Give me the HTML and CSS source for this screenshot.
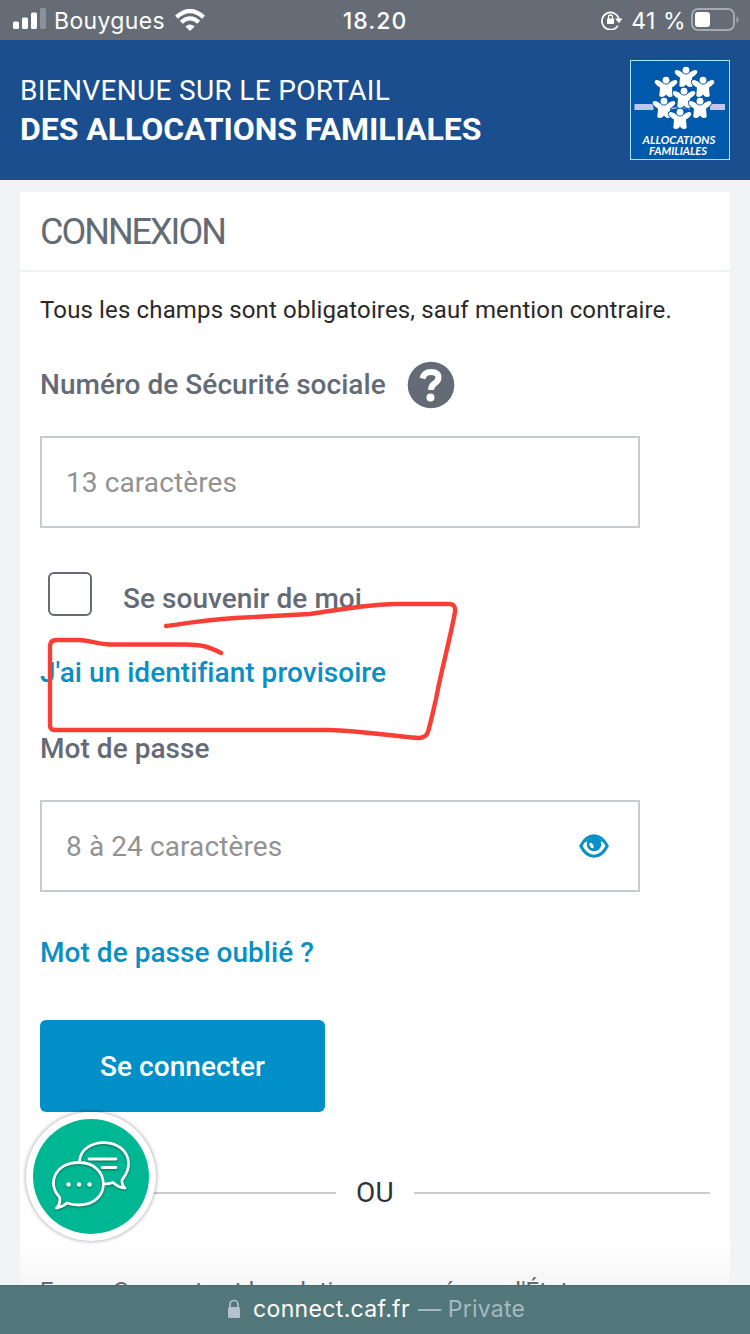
FILE: index.html
```html
<!DOCTYPE html>
<html lang="fr">
<head>
<meta charset="utf-8">
<title>Connexion</title>
<link rel="stylesheet" href="styles.css">
</head>
<body>
<div class="screen">
  <div class="status">
    <div class="status-left">
      <svg class="signal" width="34" height="22" viewBox="0 0 34 22"><g fill="#fff"><rect x="0" y="13.5" width="6" height="7.500" rx="1.500"/><rect x="9" y="9.500" width="6" height="11.500" rx="1.500"/><rect x="18" y="4.500" width="6" height="16.500" rx="1.500"/><rect x="27" y="0" width="6" height="21" rx="1.500" opacity=".25"/></g></svg>
      <span class="carrier">Bouygues</span>
      <svg class="wifi" width="30" height="22" viewBox="0 0 30 22"><g fill="none" stroke="#fff" stroke-width="4.200"><path d="M1.500 8.200Q15-4.200 28.500 8.200"/><path d="M6.300 13.200Q15 5.500 23.700 13.200"/></g><path d="M15 22l-4.600-4.600q4.600-3.900 9.200 0z" fill="#fff"/></svg>
    </div>
    <span class="clock">18.20</span>
    <div class="status-right">
      <svg width="22" height="20" viewBox="0 0 22 20"><path d="M16.800 15.700A8.600 8.600 0 1 1 18 9.500" fill="none" stroke="#fff" stroke-width="1.700"/><path d="M14 8.500h7.500L18 13.200z" fill="#fff"/><rect x="6" y="8.500" width="7" height="5.500" rx=".7" fill="#fff"/><path d="M7.500 9V7a2 2 0 0 1 4 0v2" fill="none" stroke="#fff" stroke-width="1.300"/></svg>
      <span class="percent">41 %</span>
      <svg width="48" height="24" viewBox="0 0 48 24"><rect x="1" y="1" width="42" height="21" rx="6" fill="none" stroke="#a5a9b0" stroke-width="2"/><rect x="4" y="4" width="15" height="15" rx="3" fill="#fff"/><path d="M45.500 8.200q4 3.500 0 7z" fill="#a5a9b0"/></svg>
    </div>
  </div>

  <header class="banner">
    <div class="banner-title">
      <span class="welcome">BIENVENUE SUR LE PORTAIL</span>
      <strong class="portal">DES ALLOCATIONS FAMILIALES</strong>
    </div>
    <svg class="logo" width="100" height="100" viewBox="0 0 100 100">
      <defs>
        <g id="person" stroke="#0059aa" stroke-width="2" paint-order="stroke">
          <path d="M-11-4.300C-12-2-10.500-.8-6 2.500L-6.700 11Q-4.300 13-1.600 11.300L0 9.500l1.600 1.800Q4.300 13 6.700 11L6 2.500C10.500-.8 12-2 11-4.300 9.500-6 6.500-4.500 3.800-2.600Q0-1.200-3.800-2.600C-6.500-4.500-9.500-6-11-4.300z"/>
          <circle cy="-4.800" r="3.400"/>
        </g>
      </defs>
      <rect x=".5" y=".5" width="99" height="99" fill="#0059aa" stroke="#a9e5f8"/>
      <path fill="#bec6ee" d="M4.500 44h19v6h-19zM80 44h15v6H80z"/>
      <path d="M40 49q10-3 20 0" fill="none" stroke="#bec6ee" stroke-width="1.500"/>
      <g fill="#fff">
        <use href="#person" x="56" y="15"/>
        <use href="#person" x="36" y="25"/>
        <use href="#person" x="73" y="25"/>
        <use href="#person" x="54" y="36"/>
        <use href="#person" x="34" y="46"/>
        <use href="#person" x="70" y="46"/>
        <use href="#person" x="50" y="57"/>
      </g>
      <g class="logo-text"><text x="12.500" y="84" textLength="73" lengthAdjust="spacingAndGlyphs">ALLOCATIONS</text><text x="19" y="95" textLength="58" lengthAdjust="spacingAndGlyphs">FAMILIALES</text></g>
    </svg>
  </header>

  <main class="card">
    <h1 class="heading">CONNEXION</h1>
    <div class="form">
      <p class="notice">Tous les champs sont obligatoires, sauf mention contraire.</p>
      <div class="label-row">
        <label class="label ssn">Numéro de Sécurité sociale</label>
        <svg width="48" height="48" viewBox="0 0 48 48"><circle cx="24" cy="24" r="23.300" fill="#646b76"/><path d="M15.500 17.500Q17 11 24 11Q31.500 11 31.500 16.500Q31.500 20 27.500 22.500Q24 25 24 29" fill="none" stroke="#fff" stroke-width="6"/><circle cx="23.500" cy="36.500" r="4" fill="#fff"/></svg>
      </div>
      <div class="field"><span>13 caractères</span></div>
      <div class="remember"><span class="checkbox"></span><span class="label rem">Se souvenir de moi</span></div>
      <a class="link temp">J'ai un identifiant provisoire</a>
      <label class="label pwd">Mot de passe</label>
      <div class="field"><span>8 à 24 caractères</span>
        <svg width="30" height="24" viewBox="0 0 30 24"><path d="M1.800 12Q7 1.800 15 1.800T28.200 12Q23 22.200 15 22.200T1.800 12z" fill="#fff" stroke="#0a90c4" stroke-width="3"/><path d="M4 9Q15-2 26 9L21 7H9z" fill="#0a90c4"/><circle cx="15" cy="10" r="7.300" fill="#0a90c4"/><ellipse cx="12.500" cy="11.500" rx="1.700" ry="3" transform="rotate(-30 12.500 11.500)" fill="#fff"/></svg>
      </div>
      <a class="link forgot">Mot de passe oublié ?</a>
      <button class="submit">Se connecter</button>
      <div class="separator"><span>OU</span></div>
      <p class="france">FranceConnect est la solution proposée par l'État</p>
    </div>
  </main>

  <footer class="address">
    <svg width="14" height="20" viewBox="0 0 14 20"><rect x="1" y="8" width="12" height="11" rx="1.500" fill="#b5c2cc"/><path d="M3 9V5.500a4 4 0 0 1 8 0V9" fill="none" stroke="#b5c2cc" stroke-width="1.700"/></svg>
    <span class="domain">connect.caf.fr</span><span class="private">— Private</span>
  </footer>

  <svg class="annotation" width="420" height="150" viewBox="45 595 420 150"><path d="M166 626C195 622 205 620 235 618L310 614C345 609 370 604 395 604H449Q456 604 455 612C449 644 441 671 436 699Q431 721 428 732Q426 738 418 738C390 736 365 731 328 730H54Q50 730 50 725V646Q50 640 57 640H78C88 640 98 644 110 644.500H185C203 644.500 209 647 221 653"/></svg>

  <div class="chat">
    <svg width="80" height="72" viewBox="0 0 80 72"><g fill="none" stroke="#fff" stroke-width="2.800" stroke-linejoin="round" stroke-linecap="round"><path d="M28.500 20.500C30-5 77.500-5 77.500 23C77.500 32 72 37 71 39Q70.500 44 74 47Q68 47 62 41.500Q58 43 54 43"/><path d="M8.500 56C-4 44 3 21.500 28 21.500C60 21.500 61 64 28 64Q21 64 16 62Q11.500 66 5.500 67Q10 62.500 8.500 56z"/><path d="M38 18h27M51 26.500h14"/></g><g fill="#fff"><circle cx="17.500" cy="43.500" r="2.300"/><circle cx="28" cy="43.500" r="2.300"/><circle cx="38.500" cy="43.500" r="2.300"/></g></svg>
  </div>
</div>
</body>
</html>
```
FILE: styles.css
```css
* { box-sizing: border-box; }
body { margin: 0; font-family: Roboto, "Liberation Sans", sans-serif; }
.screen { position: relative; width: 750px; height: 1334px; overflow: hidden; display: flex; flex-direction: column; background: #f1f3f5; }
svg { display: block; flex: none; }
span, p, a, label, strong { white-space: nowrap; }

.status { height: 40px; flex: none; display: grid; grid-template-columns: 1fr auto 1fr; align-items: center; padding: 0 11px 0 13px; background: #656c76; color: #fff; font-family: Inter, sans-serif; font-size: 23px; }
.status-left, .status-right { display: flex; align-items: center; }
.status-right { justify-content: flex-end; }
.signal { margin-top: -2px; }
.carrier { margin-left: 7px; padding-top: 2px; letter-spacing: .35px; }
.wifi { margin-left: 10px; }
.clock { margin-right: 2px; padding-top: 2px; font-weight: 500; letter-spacing: 1px; }
.percent { margin: 0 5px 0 8px; padding-top: 2px; letter-spacing: .5px; }

.banner { height: 140px; flex: none; display: flex; justify-content: space-between; padding: 20px; background: #1b4e8f; color: #fff; }
.banner-title { display: flex; flex-direction: column; padding-top: 12px; }
.welcome { font-size: 28px; line-height: 38px; letter-spacing: .33px; }
.portal { font-size: 32px; line-height: 39px; font-weight: 700; letter-spacing: -.05px; }
.logo-text { font: italic 700 11px Lato, sans-serif; fill: #fff; }

.card { flex: none; width: 710px; height: 1093px; margin: 12px 20px 0; background: linear-gradient(#fff 1050px, #f6f6f7); overflow: hidden; }
.heading { height: 80px; margin: 0; padding-left: 20px; border-bottom: 2px solid #f0f1f3; color: #646b76; font-size: 36px; font-weight: 400; line-height: 81px; letter-spacing: -2px; }
.form { display: flex; flex-direction: column; align-items: flex-start; padding: 20px 20px 0; }
.notice { margin: 0; font-size: 24px; line-height: 36px; color: #292929; letter-spacing: .14px; }
.label-row { display: flex; align-items: center; gap: 21px; height: 48px; margin-top: 33px; }
.label { color: #646b76; font-size: 28px; font-weight: 500; line-height: 36px; letter-spacing: .04px; }
.field { display: flex; align-items: center; justify-content: space-between; width: 600px; height: 92px; margin-top: 27px; padding: 0 29px 0 24px; border: 2px solid #c8cbce; color: #929292; font-size: 28px; letter-spacing: .1px; }
.field span { padding-top: 1px; }
.remember { display: flex; align-items: center; height: 44px; margin: 44px 0 0 8px; gap: 31px; }
.checkbox { width: 44px; height: 44px; border: 2px solid #646b76; border-radius: 6px; }
.rem { margin-top: 10px; }
.link { color: #0a8fc4; font-size: 28px; font-weight: 500; line-height: 36px; letter-spacing: .04px; }
.temp { margin-top: 39px; }
.pwd { margin-top: 40px; }
.pwd + .field { margin-top: 33px; }
.forgot { margin-top: 43px; }
.submit { width: 285px; height: 92px; margin-top: 49px; padding: 0; border: 0; border-radius: 6px; background: #0090c7; color: #fff; font: 500 28px Roboto, sans-serif; letter-spacing: .04px; }
.separator { display: flex; align-items: center; gap: 20px; width: 670px; height: 40px; margin-top: 61px; color: #303238; font-size: 28px; letter-spacing: .2px; }
.separator span { margin-top: -2px; }
.separator::before, .separator::after { content: ""; flex: 1; height: 2px; background: #cbcbce; }
.france { margin: 60px 0 0; color: #656970; font-size: 24px; line-height: 36px; letter-spacing: .14px; }

.address { height: 49px; flex: none; display: flex; justify-content: center; align-items: center; padding: 0 0 3px 2px; border-top: 1px solid #486c70; background: #52777a; color: #fff; font: 23px Inter, sans-serif; }
.domain { margin: 0 8px 0 12px; letter-spacing: .35px; }
.private { color: #a5bac0; letter-spacing: .2px; }

.annotation { position: absolute; left: 45px; top: 595px; }
.annotation path { fill: none; stroke: #f83e35; stroke-width: 4.4; stroke-linecap: round; stroke-linejoin: round; }
.chat { position: absolute; left: 26px; top: 1112px; width: 130px; height: 129px; display: flex; align-items: center; justify-content: center; border: 7px solid #fff; border-radius: 50%; background: #00b794; box-shadow: 0 0 4px #0006; }
.chat svg { filter: drop-shadow(0 1px 1px #0006); }
```
